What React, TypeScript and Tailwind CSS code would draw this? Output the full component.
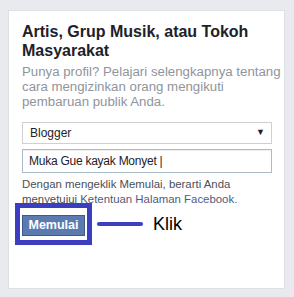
export default function App() {
  return (
    <div className="h-[297px] w-[294px] bg-[#e9eaed] pl-[8px] pr-[9px] pt-[10px] pb-[8px] font-['Liberation_Sans',Arial,sans-serif]">
      <div className="h-full border border-[#dfe0e4] bg-white pl-[13px] pr-[2px] pt-[11px]">
        <h2 className="text-[16px] font-bold leading-[19px] text-[#1d2129]">
          Artis, Grup Musik, atau Tokoh Masyarakat
        </h2>
        <p className="mt-[4px] text-[13.25px] leading-[15px] text-[#90949c]">
          Punya profil? Pelajari selengkapnya tentang cara mengizinkan orang
          mengikuti pembaruan publik Anda.
        </p>

        <div className="mt-[13px] flex h-[22px] w-[250px] items-center justify-between border border-[#cdd0d4] bg-white pl-[7px] pr-[6px] text-[12px] text-[#1d2129]">
          <span>Blogger</span>
          <span className="text-[9px]">▼</span>
        </div>

        <div className="mt-[5px] flex h-[24px] w-[250px] items-center border border-[#a9bccb] bg-white px-[6px] text-[12px] tracking-[-0.25px] text-[#1d2129] shadow-[inset_0_1px_1px_rgba(0,0,0,0.07)]">
          Muka Gue kayak Monyet |
        </div>

        <p className="mt-[4px] text-[11.4px] leading-[15px] text-[#4b4f56]">
          Dengan mengeklik Memulai, berarti Anda
          <br />
          menyetujui{" "}
          <span className="text-[#4f5b7e]">Ketentuan Halaman Facebook.</span>
        </p>

        <div className="-mt-[4px] -ml-[7px] flex items-center">
          <div className="border-[5px] border-[#3b3ec0] px-[2px] py-[4px]">
            <button className="h-[21px] w-[63px] border border-[#3c5a8e] bg-[#5b7bb0] text-[12.5px] font-bold leading-none text-white">
              Memulai
            </button>
          </div>
          <div className="ml-[5px] h-[4px] w-[46px] rounded-full bg-[#3b3ec0]" />
          <span className="ml-[10px] text-[18px] leading-none text-black">Klik</span>
        </div>
      </div>
    </div>
  );
}
